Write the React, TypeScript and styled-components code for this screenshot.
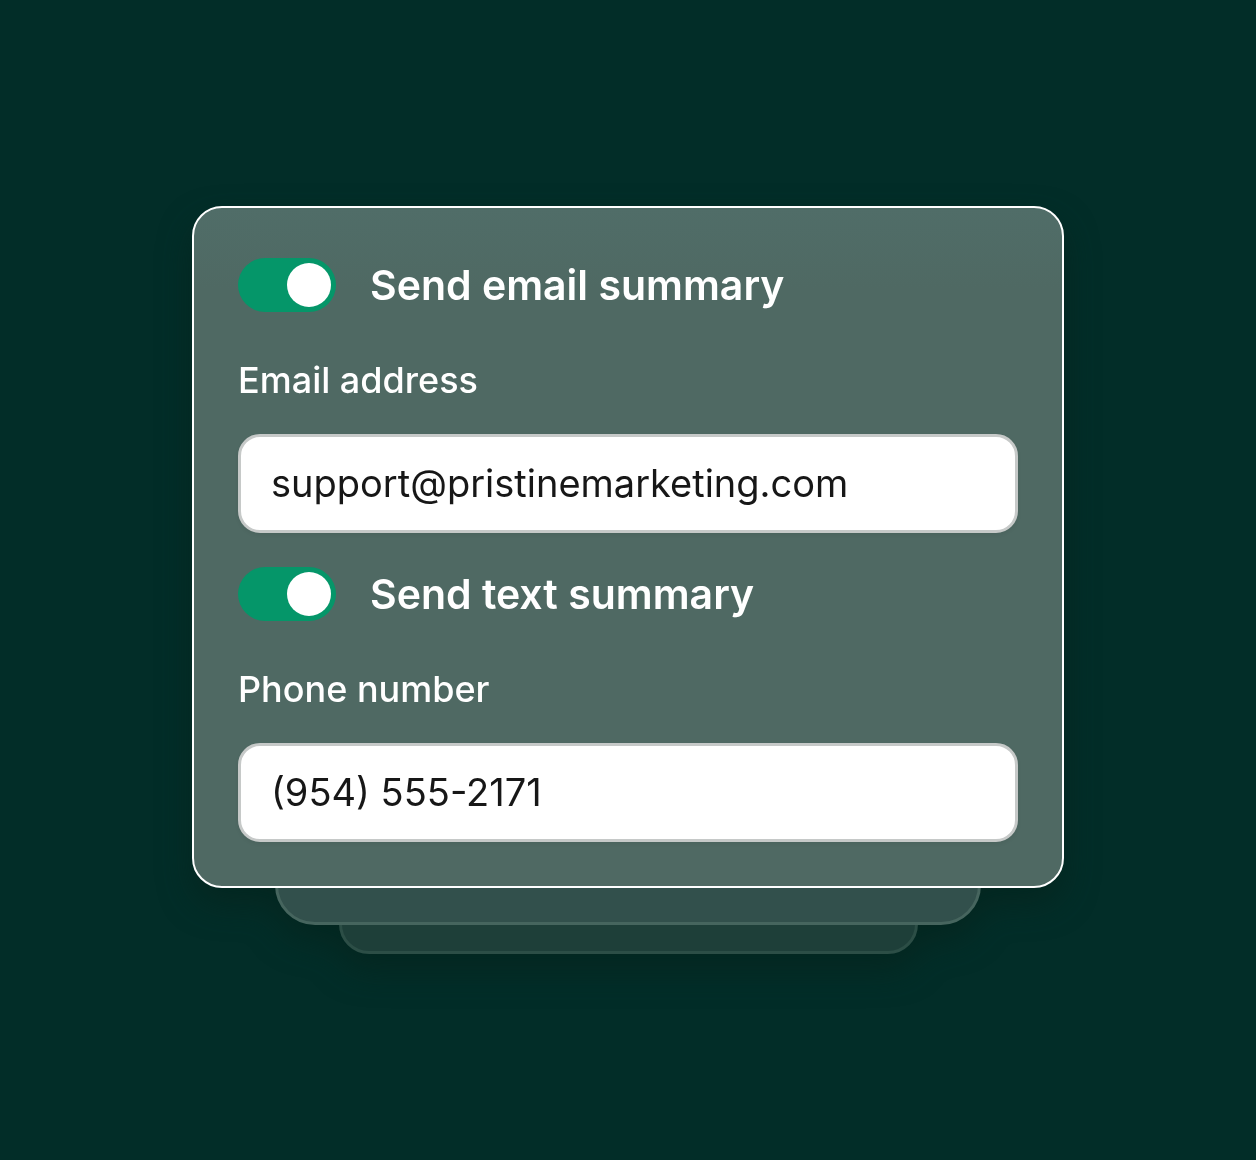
import React, { useState } from "react";
import styled, { createGlobalStyle } from "styled-components";

const GlobalStyle = createGlobalStyle`
  * {
    box-sizing: border-box;
  }
  body {
    margin: 0;
    background: #022d28;
    font-family: Inter, "Liberation Sans", sans-serif;
  }
`;

const PageSt = styled.main`
  min-height: 100vh;
  padding: 32px;
  display: flex;
  flex-direction: column;
  align-items: center;
  justify-content: center;
`;

const Stack = styled.div`
  width: 100%;
  max-width: 872px;
  display: flex;
  flex-direction: column;
  align-items: center;
  isolation: isolate;
  filter: drop-shadow(0 16px 16px rgba(4, 36, 28, 0.7));
`;

const Card = styled.form`
  position: relative;
  z-index: 2;
  width: 100%;
  padding: 50px 44px 44px;
  display: flex;
  flex-direction: column;
  gap: 34px;
  border: 2px solid #ffffff;
  border-radius: 30px;
  background: linear-gradient(180deg, #506d68 0%, #4f6963 12%, #4f6963 100%);
`;

const Layer = styled.div<{ $depth: number }>`
  position: relative;
  z-index: ${({ $depth }) => 2 - $depth};
  width: ${({ $depth }) => ($depth === 1 ? "81%" : "66.4%")};
  height: ${({ $depth }) => ($depth === 1 ? "81px" : "73px")};
  margin-top: -44px;
  border: 3px solid ${({ $depth }) => ($depth === 1 ? "#46655e" : "#2c4e46")};
  border-radius: ${({ $depth }) => ($depth === 1 ? "40px" : "30px")};
  background: ${({ $depth }) => ($depth === 1 ? "#32504c" : "#1e3f39")};
`;

const Section = styled.section`
  display: flex;
  flex-direction: column;
`;

const ToggleRow = styled.label`
  display: flex;
  align-items: center;
  gap: 34px;
  font-size: 41px;
  font-weight: 600;
  line-height: 54px;
  color: #ffffff;
`;

const Switch = styled.input`
  appearance: none;
  flex-shrink: 0;
  width: 98px;
  height: 54px;
  margin: 0;
  padding: 5px;
  display: flex;
  justify-content: flex-start;
  border-radius: 27px;
  background: #8a9a96;
  cursor: pointer;

  &::before {
    content: "";
    width: 44px;
    height: 44px;
    border-radius: 50%;
    background: #ffffff;
  }
  &:checked {
    justify-content: flex-end;
    background: #059669;
  }
`;

const FieldLabel = styled.label`
  margin: 46px 0 32px;
  font-size: 36px;
  font-weight: 500;
  line-height: 44px;
  color: #ffffff;
`;

const TextInput = styled.input`
  width: 100%;
  height: 99px;
  padding: 0 30px 2px;
  border: 3px solid #c6c9c8;
  border-radius: 22px;
  background: #ffffff;
  font-family: inherit;
  font-size: 38px;
  color: #171717;
  box-shadow: 0 2px 4px rgba(0, 0, 0, 0.06);
`;

interface SummaryFieldProps {
  id: string;
  title: string;
  label: string;
  type: string;
  initialValue: string;
}

function SummaryField({ id, title, label, type, initialValue }: SummaryFieldProps) {
  const [enabled, setEnabled] = useState(true);
  const [value, setValue] = useState(initialValue);

  return (
    <Section>
      <ToggleRow>
        <Switch type="checkbox" role="switch" checked={enabled} onChange={(e) => setEnabled(e.target.checked)} />
        {title}
      </ToggleRow>
      <FieldLabel htmlFor={id}>{label}</FieldLabel>
      <TextInput
        id={id}
        type={type}
        value={value}
        spellCheck={false}
        disabled={!enabled}
        onChange={(e) => setValue(e.target.value)}
      />
    </Section>
  );
}

export default function App() {
  return (
    <PageSt>
      <GlobalStyle />
      <Stack>
        <Card>
          <SummaryField
            id="email"
            title="Send email summary"
            label="Email address"
            type="email"
            initialValue="support@pristinemarketing.com"
          />
          <SummaryField
            id="phone"
            title="Send text summary"
            label="Phone number"
            type="tel"
            initialValue="(954) 555-2171"
          />
        </Card>
        <Layer $depth={1} />
        <Layer $depth={2} />
      </Stack>
    </PageSt>
  );
}
